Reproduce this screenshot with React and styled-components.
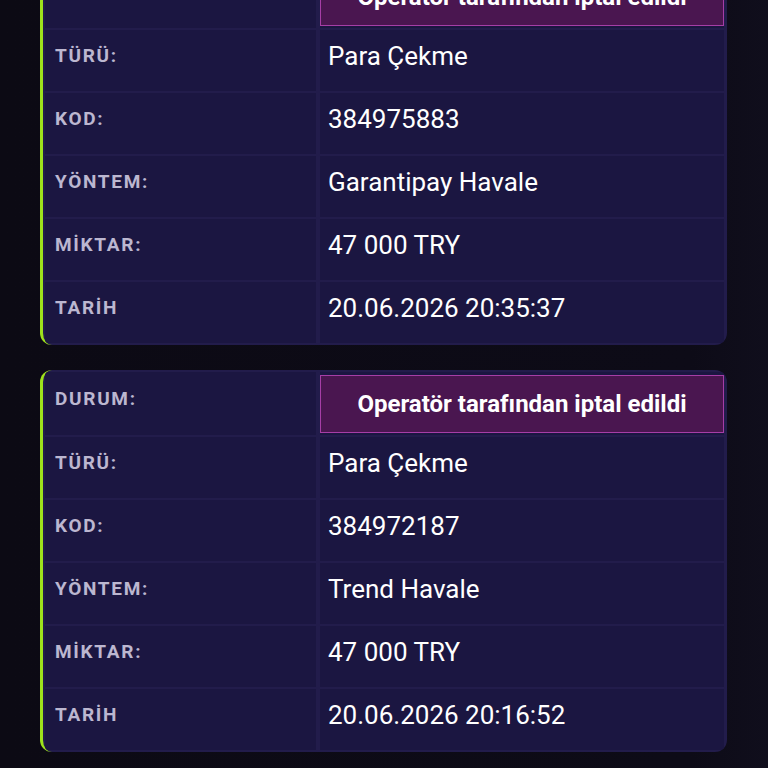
import React from "react";
import styled, { createGlobalStyle } from "styled-components";

const GlobalStyle = createGlobalStyle`
  html, body {
    margin: 0;
    padding: 0;
    background: #0c0a15;
    font-family: Roboto, "Noto Sans", sans-serif;
    overflow: hidden;
  }
`;

const Page = styled.div`
  width: 768px;
  height: 768px;
  overflow: hidden;
  background: linear-gradient(90deg, #0c0a14 0%, #0d0b17 90%, #100e1c 100%);
`;

const List = styled.div`
  display: flex;
  flex-direction: column;
  gap: 25px;
  margin-top: -37px;
  padding: 0 41px 0 40px;
`;

const Card = styled.div`
  display: grid;
  grid-template-columns: 271px 1fr;
  gap: 2px 4px;
  padding: 2px 3px 2px 2px;
  background: #221c4b;
  border-left: 3px solid #9ee21c;
  border-radius: 12px;
  overflow: hidden;
`;

const Label = styled.div`
  display: flex;
  align-items: center;
  height: ${(p) => (p.$tall ? "63px" : "61px")};
  box-sizing: border-box;
  padding: 0 0 10px 10px;
  background: #1b1641;
  color: #bcb7d0;
  font-size: 19px;
  font-weight: 700;
  letter-spacing: 1.7px;
`;

const Value = styled.div`
  display: flex;
  align-items: center;
  height: 61px;
  box-sizing: border-box;
  padding: 0 0 10px 8px;
  background: #1b1641;
  color: #ffffff;
  font-size: 26px;
`;

const StatusCell = styled.div`
  display: flex;
  align-items: stretch;
  height: 63px;
  padding: 3px 0 2px;
  box-sizing: border-box;
  background: #1b1641;
`;

const Badge = styled.div`
  flex: 1;
  display: flex;
  align-items: center;
  justify-content: center;
  background: #4a1650;
  border: 1px solid #a63ea6;
  color: #ffffff;
  font-size: 24px;
  font-weight: 700;
`;

const transactions = [
  {
    status: "Operatör tarafından iptal edildi",
    type: "Para Çekme",
    code: "384975883",
    method: "Garantipay Havale",
    amount: "47 000 TRY",
    date: "20.06.2026 20:35:37",
  },
  {
    status: "Operatör tarafından iptal edildi",
    type: "Para Çekme",
    code: "384972187",
    method: "Trend Havale",
    amount: "47 000 TRY",
    date: "20.06.2026 20:16:52",
  },
];

const TransactionCard = ({ t }) => (
  <Card>
    <Label $tall>DURUM:</Label>
    <StatusCell>
      <Badge>{t.status}</Badge>
    </StatusCell>
    <Label>TÜRÜ:</Label>
    <Value>{t.type}</Value>
    <Label>KOD:</Label>
    <Value>{t.code}</Value>
    <Label>YÖNTEM:</Label>
    <Value>{t.method}</Value>
    <Label>MİKTAR:</Label>
    <Value>{t.amount}</Value>
    <Label>TARİH</Label>
    <Value>{t.date}</Value>
  </Card>
);

export default function App() {
  return (
    <Page>
      <GlobalStyle />
      <List>
        {transactions.map((t) => (
          <TransactionCard key={t.code} t={t} />
        ))}
      </List>
    </Page>
  );
}
